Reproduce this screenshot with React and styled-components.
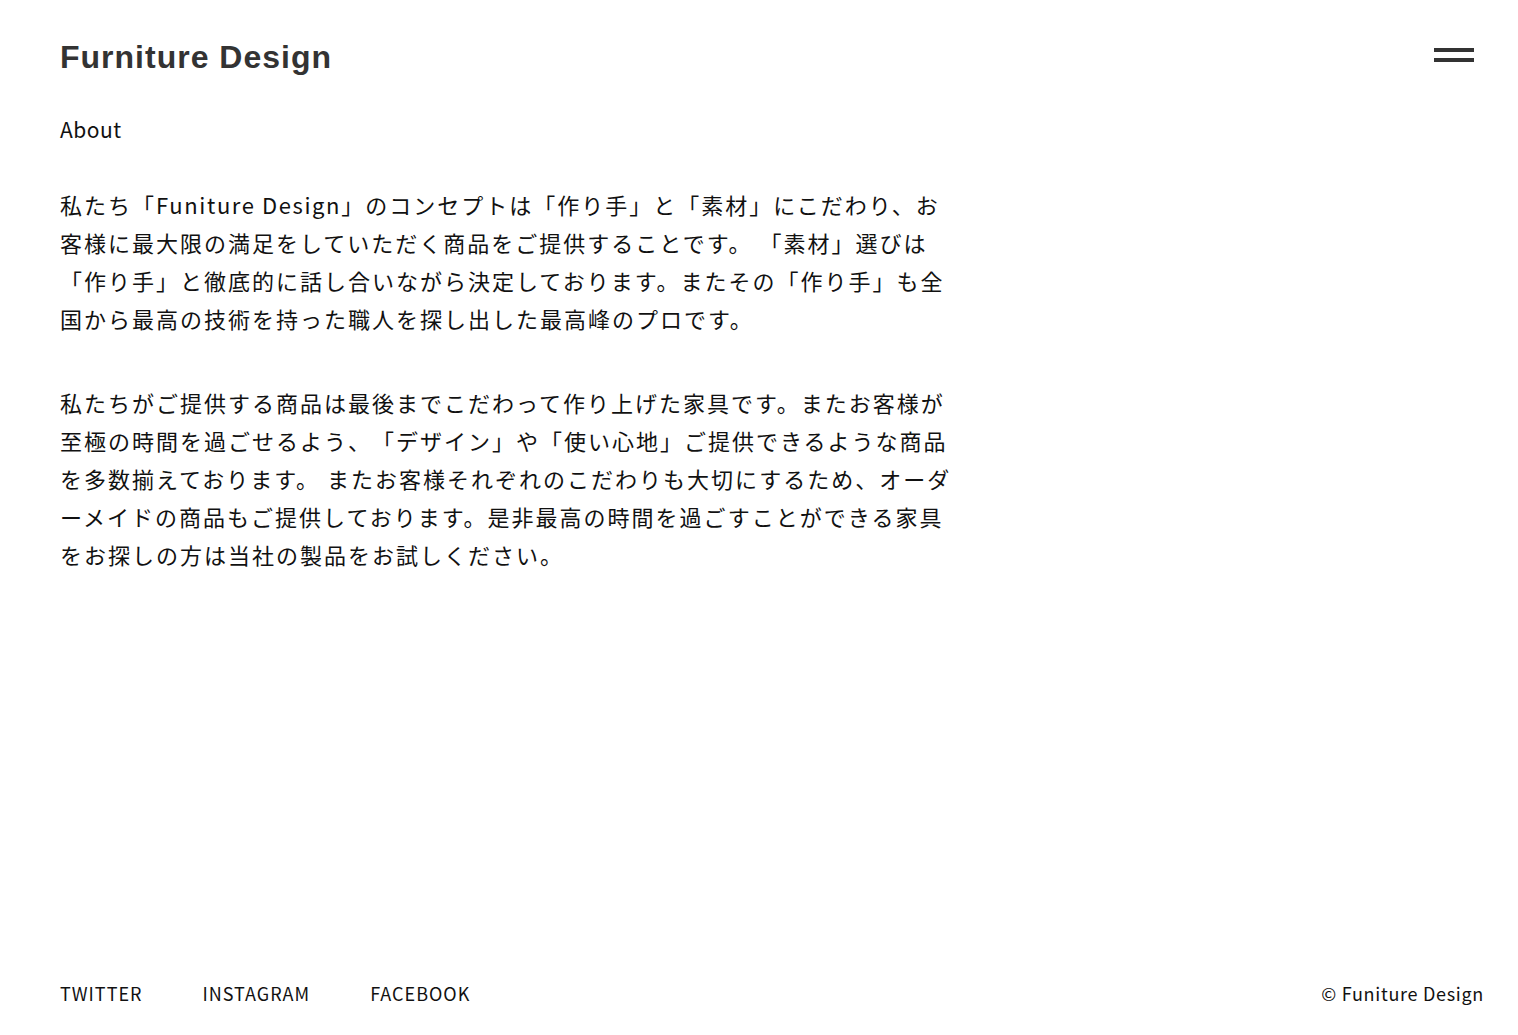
import React from "react";
import styled, { createGlobalStyle } from "styled-components";

const GlobalStyle = createGlobalStyle`
  html, body { margin: 0; padding: 0; background: #fff; }
  body {
    font-family: "Noto Sans CJK JP", "Noto Sans", sans-serif;
    color: #111;
  }
  * { box-sizing: border-box; }
`;

const Page = styled.div`
  min-height: 100vh;
  display: flex;
  flex-direction: column;
`;

const Header = styled.header`
  display: flex;
  justify-content: space-between;
  align-items: center;
  padding: 38px 44px 0 60px;
`;

const Logo = styled.h1`
  margin: 0;
  font-family: "Liberation Sans", Arial, sans-serif;
  font-weight: 700;
  font-size: 32px;
  line-height: 38px;
  letter-spacing: 1px;
  color: #333;
`;

const MenuButton = styled.button`
  display: flex;
  flex-direction: column;
  gap: 6px;
  width: 40px;
  padding: 0;
  margin-top: -4px;
  border: 0;
  background: transparent;
  cursor: pointer;
`;

const Bar = styled.span`
  display: block;
  width: 40px;
  height: 4px;
  background: #333;
`;

const Main = styled.main`
  padding: 0 60px;
`;

const SectionTitle = styled.h2`
  margin: 36px 0 0;
  font-weight: 400;
  font-size: 21px;
  line-height: 35px;
  letter-spacing: 0.5px;
  color: #111;
`;

const Body = styled.div`
  margin-top: 38px;
  width: 910px;
  display: flex;
  flex-direction: column;
  gap: 46px;
`;

const Para = styled.p`
  margin: 0;
  font-size: 22px;
  line-height: 38px;
  letter-spacing: 2px;
  white-space: nowrap;
  text-spacing-trim: space-all;
  font-feature-settings: "palt" 0, "halt" 0;
  color: #111;
`;

const Latin = styled.span`
  letter-spacing: 1.6px;
`;

const Footer = styled.footer`
  margin-top: auto;
  display: flex;
  justify-content: space-between;
  align-items: center;
  padding: 0 34px 28px 60px;
`;

const Links = styled.nav`
  display: flex;
  gap: 60px;
`;

const FootText = styled.a`
  font-size: 18px;
  line-height: 27px;
  letter-spacing: ${(p) => (p.$tight ? "0.7px" : "1px")};
  color: #111;
  text-decoration: none;
`;

export default function App() {
  return (
    <Page>
      <GlobalStyle />
      <Header>
        <Logo>Furniture Design</Logo>
        <MenuButton aria-label="menu">
          <Bar />
          <Bar />
        </MenuButton>
      </Header>
      <Main>
        <SectionTitle>About</SectionTitle>
        <Body>
          <Para>
            私たち「<Latin>Funiture Design</Latin>」のコンセプトは「作り手」と「素材」にこだわり、お
            <br />
            客様に最大限の満足をしていただく商品をご提供することです。 「素材」選びは
            <br />
            「作り手」と徹底的に話し合いながら決定しております。またその「作り手」も全
            <br />
            国から最高の技術を持った職人を探し出した最高峰のプロです。
          </Para>
          <Para>
            私たちがご提供する商品は最後までこだわって作り上げた家具です。またお客様が
            <br />
            至極の時間を過ごせるよう、「デザイン」や「使い心地」ご提供できるような商品
            <br />
            を多数揃えております。 またお客様それぞれのこだわりも大切にするため、オーダ
            <br />
            ーメイドの商品もご提供しております。是非最高の時間を過ごすことができる家具
            <br />
            をお探しの方は当社の製品をお試しください。
          </Para>
        </Body>
      </Main>
      <Footer>
        <Links>
          <FootText href="#">TWITTER</FootText>
          <FootText href="#">INSTAGRAM</FootText>
          <FootText href="#">FACEBOOK</FootText>
        </Links>
        <FootText as="small" $tight>© Funiture Design</FootText>
      </Footer>
    </Page>
  );
}
